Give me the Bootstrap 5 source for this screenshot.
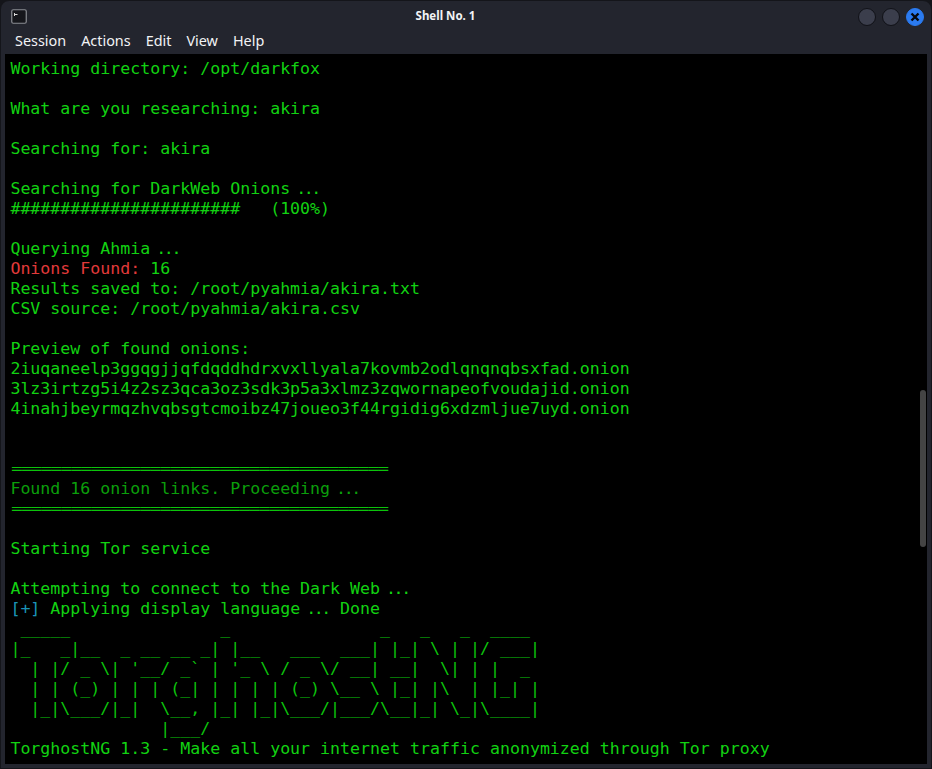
<!DOCTYPE html>
<html lang="en">
<head>
<meta charset="utf-8">
<title>Shell No. 1</title>
<link href="https://cdn.jsdelivr.net/npm/bootstrap@5.3.0/dist/css/bootstrap.min.css" rel="stylesheet">
<style>
html, body { height: 100%; margin: 0; background: #14151a; overflow: hidden; }
.win-frame { height: 769px; background: #23252e; border: 1px solid #14151a; border-radius: 9px 9px 0 0; overflow: hidden; }
.title-row { height: 31px; padding: 0 7px 0 10px; }
.app-glyph { width: 16px; height: 15px; }
.win-title { font: 700 11.5px "Noto Sans", sans-serif; color: #f2f3f5; padding-left: 6px; margin-bottom: 3px; }
.win-btn { width: 18px; height: 18px; border-radius: 50%; background: #3b3e4c; border: 1px solid #111218; padding: 0; margin-right: 6px; }
.win-btn:last-child { margin-right: 0; }
.win-btn-close { background: #2b7bf0; border-color: #2b7bf0; }
.menu-row { height: 22px; padding-left: 4px; }
.menu-item { font: 400 14.4px/18px "Noto Sans", sans-serif; color: #f2f3f5; padding: 0 5px 0 10px; }
.term { margin: 0 4px 4px; background: #000; flex: 1 1 auto; min-height: 0; overflow: hidden; position: relative; }
.term-text { margin: 0; padding: 5px 0 0 5.4px; font: 400 16.6px/20px "DejaVu Sans Mono", monospace; color: #12d212; overflow: hidden; }
.c-red { color: #e23a3a; }
.c-dim { color: #0b9e0b; }
.c-art { color: #0cc40c; }
.c-blue { color: #1a93b8; }
.c-rule { color: #0cc40c; font-family: "Liberation Mono", monospace; font-size: 16.5px; line-height: 0; margin-left: 1.6px; }
.dots { letter-spacing: -2.4px; margin-left: 6px; margin-right: 1.2px; }
.thumb { position: absolute; top: 336px; right: 1px; width: 6px; height: 157px; background: #444; border-radius: 3px; }
</style>
</head>
<body>
<div class="win-frame d-flex flex-column">
  <div class="title-row d-flex align-items-center justify-content-between">
    <svg class="app-glyph" viewBox="0 0 16 15"><rect x=".75" y=".75" width="14.5" height="13.5" rx="1.5" fill="#15161b" stroke="#8b8d93" stroke-width="1.2"/><path d="M3.5 4v3M3.5 5.5h3" stroke="#d8d8d8" stroke-width="1"/></svg>
    <div class="win-title flex-grow-1 text-center">Shell No. 1</div>
    <div class="d-flex">
      <button class="win-btn" type="button" aria-label="Minimize"></button>
      <button class="win-btn" type="button" aria-label="Maximize"></button>
      <button class="win-btn win-btn-close d-flex align-items-center justify-content-center" type="button" aria-label="Close"><svg width="10" height="10" viewBox="0 0 10 10"><path d="M1.5 1.5l7 7M8.5 1.5l-7 7" stroke="#06070a" stroke-width="2.4"/></svg></button>
    </div>
  </div>
  <div class="menu-row d-flex">
    <span class="menu-item">Session</span><span class="menu-item">Actions</span><span class="menu-item">Edit</span><span class="menu-item">View</span><span class="menu-item">Help</span>
  </div>
  <div class="term">
<pre class="term-text">Working directory: /opt/darkfox

What are you researching: akira

Searching for: akira

Searching for DarkWeb Onions<span class="dots">...</span>
#######################   (100%)

Querying Ahmia<span class="dots">...</span>
<span class="c-red">Onions Found:</span> 16
Results saved to: /root/pyahmia/akira.txt
CSV source: /root/pyahmia/akira.csv

Preview of found onions:
2iuqaneelp3ggqgjjqfdqddhdrxvxllyala7kovmb2odlqnqnqbsxfad.onion
3lz3irtzg5i4z2sz3qca3oz3sdk3p5a3xlmz3zqwornapeofvoudajid.onion
4inahjbeyrmqzhvqbsgtcmoibz47joueo3f44rgidig6xdzmljue7uyd.onion


<span class="c-rule">══════════════════════════════════════</span>
<span class="c-dim">Found 16 onion links. Proceeding<span class="dots">...</span></span>
<span class="c-rule">══════════════════════════════════════</span>

Starting Tor service

Attempting to connect to the Dark Web<span class="dots">...</span>
<span class="c-blue">[+]</span> Applying display language<span class="dots">...</span> Done
<span class="c-art"> _____               _               _   _   _  ____
|_   _|__  _ __ __ _| |__   ___  ___| |_| \ | |/ ___|
  | |/ _ \| '__/ _` | '_ \ / _ \/ __| __|  \| | |  _
  | | (_) | | | (_| | | | | (_) \__ \ |_| |\  | |_| |
  |_|\___/|_|  \__, |_| |_|\___/|___/\__|_| \_|\____|
               |___/</span>
TorghostNG 1.3 - Make all your internet traffic anonymized through Tor proxy</pre>
    <div class="thumb"></div>
  </div>
</div>
<script src="https://cdn.jsdelivr.net/npm/bootstrap@5.3.0/dist/js/bootstrap.bundle.min.js"></script>
</body>
</html>
